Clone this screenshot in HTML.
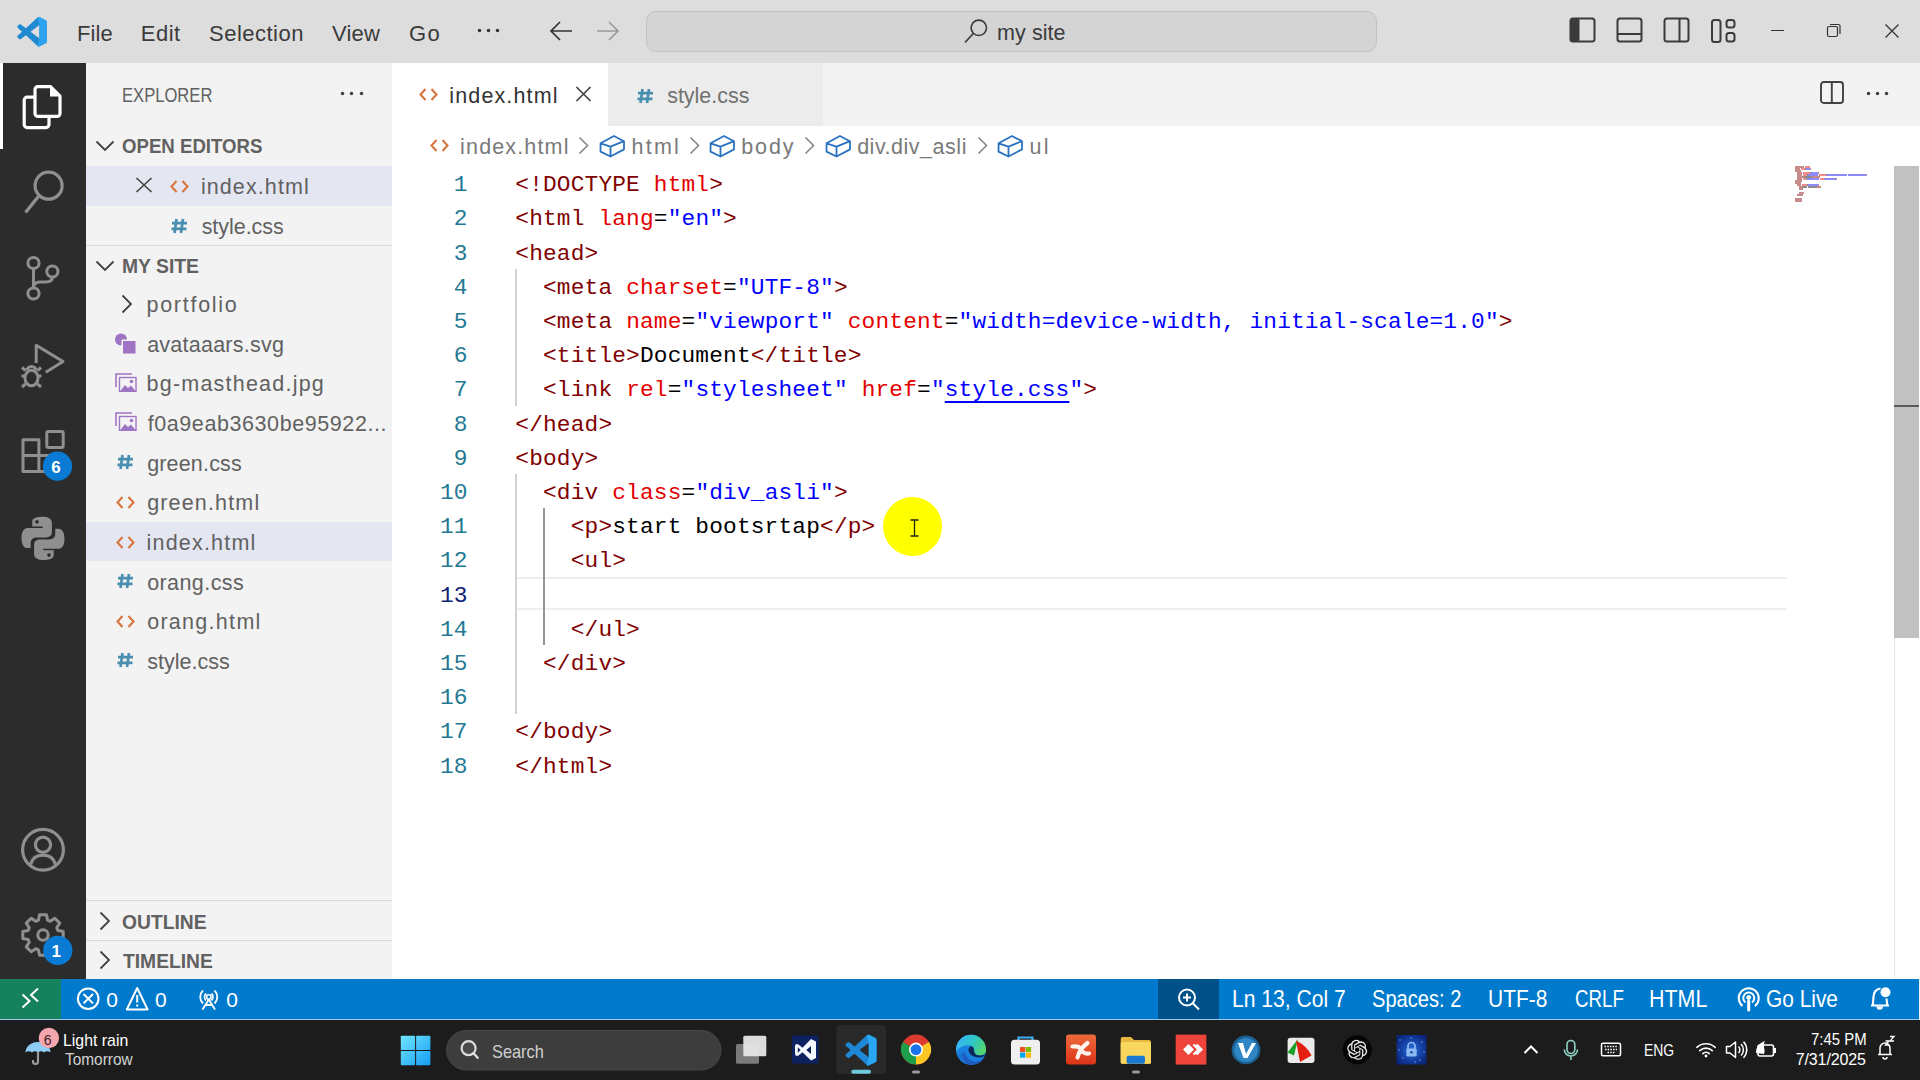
<!DOCTYPE html>
<html><head><meta charset="utf-8"><style>
html,body{margin:0;padding:0;width:1920px;height:1080px;overflow:hidden;background:#fff}
.r{position:absolute;display:block}
.t{position:absolute;white-space:pre}
</style></head><body>
<div class="r" style="left:0px;top:0px;width:1920px;height:63px;background:#dddddd;"></div>
<div class="r" style="left:0px;top:63px;width:86px;height:916px;background:#2c2c2c;"></div>
<div class="r" style="left:86px;top:63px;width:306px;height:916px;background:#f3f3f3;"></div>
<div class="r" style="left:392px;top:63px;width:1528px;height:63px;background:#f3f3f3;"></div>
<div class="r" style="left:392px;top:63px;width:216px;height:63px;background:#ffffff;"></div>
<div class="r" style="left:608px;top:63px;width:215px;height:63px;background:#ececec;"></div>
<div class="r" style="left:392px;top:126px;width:1528px;height:853px;background:#ffffff;"></div>
<div class="r" style="left:0px;top:979px;width:1920px;height:40px;background:#007acc;"></div>
<div class="r" style="left:0px;top:979px;width:61px;height:40px;background:#16825d;"></div>
<div class="r" style="left:1158px;top:979px;width:61px;height:40px;background:#00508a;"></div>
<div class="r" style="left:0px;top:1019px;width:1920px;height:1px;background:#9cc9ea;"></div>
<div class="r" style="left:0px;top:1020px;width:1920px;height:60px;background:#1c1c1c;"></div>
<svg class="r" style="left:16.5px;top:16.5px;overflow:visible" width="30" height="29.5" viewBox="0 0 100 100"><path d="M96.46 10.8L75.86.87a6.23 6.23 0 0 0-7.1 1.21L29.35 38.04 12.19 25.01a4.16 4.16 0 0 0-5.32.24l-5.5 5a4.16 4.16 0 0 0 0 6.16L16.26 50 1.37 63.58a4.16 4.16 0 0 0 0 6.16l5.5 5a4.16 4.16 0 0 0 5.32.24l17.16-13.03 39.41 35.96a6.22 6.22 0 0 0 7.1 1.21l20.6-9.92a6.24 6.24 0 0 0 3.54-5.63V16.43a6.24 6.24 0 0 0-3.54-5.63zM75.02 72.7L45.11 50l29.91-22.7v45.4z" fill="#1f8ad2"/><path d="M75.86.87a6.23 6.23 0 0 0-7.1 1.21L75.02 27.3v45.4l-6.26 25.22a6.22 6.22 0 0 0 7.1 1.21l20.6-9.92a6.24 6.24 0 0 0 3.54-5.63V16.43a6.24 6.24 0 0 0-3.54-5.63z" fill="#2ea4f0"/></svg>
<div class="t" style="left:76.94px;top:23.00px;font:400 22px/1 'Liberation Sans',sans-serif;color:#3b3b3b;letter-spacing:0.110px;">File</div>
<div class="t" style="left:140.74px;top:23.00px;font:400 22px/1 'Liberation Sans',sans-serif;color:#3b3b3b;letter-spacing:0.510px;">Edit</div>
<div class="t" style="left:209.01px;top:23.00px;font:400 22px/1 'Liberation Sans',sans-serif;color:#3b3b3b;letter-spacing:0.486px;">Selection</div>
<div class="t" style="left:331.89px;top:23.00px;font:400 22px/1 'Liberation Sans',sans-serif;color:#3b3b3b;letter-spacing:0.270px;">View</div>
<div class="t" style="left:408.90px;top:23.00px;font:400 22px/1 'Liberation Sans',sans-serif;color:#3b3b3b;letter-spacing:1.610px;">Go</div>
<svg class="r" style="left:476.9px;top:27.9px;" width="5" height="5" viewBox="0 0 5 5"><circle cx="2.5" cy="2.5" r="1.75" fill="#333"/></svg>
<svg class="r" style="left:485.9px;top:27.9px;" width="5" height="5" viewBox="0 0 5 5"><circle cx="2.5" cy="2.5" r="1.75" fill="#333"/></svg>
<svg class="r" style="left:495.0px;top:27.9px;" width="5" height="5" viewBox="0 0 5 5"><circle cx="2.5" cy="2.5" r="1.75" fill="#333"/></svg>
<svg class="r" style="left:548px;top:20px;" width="26" height="22" viewBox="0 0 26 22"><path d="M3 11H24M12 2L3 11L12 20" stroke="#333" stroke-width="1.7" fill="none"/></svg>
<svg class="r" style="left:595px;top:20px;" width="26" height="22" viewBox="0 0 26 22"><path d="M2 11H23M14 2L23 11L14 20" stroke="#999" stroke-width="1.6" fill="none"/></svg>
<div class="r" style="left:646px;top:11px;width:729px;height:39px;background:#d4d4d4;border:1px solid #c2c2c2;border-radius:10px"></div>
<svg class="r" style="left:963px;top:18px;" width="27" height="27" viewBox="0 0 27 27"><circle cx="15.8" cy="9.8" r="7.7" stroke="#3b3b3b" stroke-width="1.6" fill="none"/><path d="M10.3 15.5L2 24.5" stroke="#3b3b3b" stroke-width="1.8"/></svg>
<div class="t" style="left:997.10px;top:22.62px;font:400 21.5px/1 'Liberation Sans',sans-serif;color:#3b3b3b;letter-spacing:0.053px;">my site</div>
<svg class="r" style="left:1569px;top:17px;" width="28" height="27" viewBox="0 0 28 27"><rect x="1.5" y="1.5" width="24" height="23" rx="2.5" stroke="#3b3b3b" stroke-width="2" fill="none"/><rect x="1.5" y="1.5" width="9" height="23" rx="2" fill="#3b3b3b"/></svg>
<svg class="r" style="left:1616px;top:17px;" width="28" height="27" viewBox="0 0 28 27"><rect x="1.5" y="1.5" width="24" height="23" rx="2.5" stroke="#3b3b3b" stroke-width="2" fill="none"/><path d="M1.5 17H25.5" stroke="#3b3b3b" stroke-width="2"/></svg>
<svg class="r" style="left:1663px;top:17px;" width="28" height="27" viewBox="0 0 28 27"><rect x="1.5" y="1.5" width="24" height="23" rx="2.5" stroke="#3b3b3b" stroke-width="2" fill="none"/><path d="M16.5 1.5V25" stroke="#3b3b3b" stroke-width="2"/></svg>
<svg class="r" style="left:1711px;top:18px;" width="27" height="26" viewBox="0 0 27 26"><rect x="1" y="2" width="8.5" height="22" rx="2.5" stroke="#3b3b3b" stroke-width="2" fill="none"/><rect x="15.5" y="2" width="8" height="7.5" rx="2.5" stroke="#3b3b3b" stroke-width="2" fill="none"/><rect x="15.5" y="15" width="8" height="8.5" rx="2.5" stroke="#3b3b3b" stroke-width="2" fill="none"/></svg>
<div class="r" style="left:1771px;top:30px;width:13px;height:1.3px;background:#333;"></div>
<svg class="r" style="left:1826px;top:23px;" width="16" height="15" viewBox="0 0 16 15"><rect x="1.5" y="3.5" width="10" height="10" rx="1.5" stroke="#333" stroke-width="1.2" fill="none"/><path d="M4 1.5H12.5a1.5 1.5 0 0 1 1.5 1.5V11" stroke="#333" stroke-width="1.2" fill="none"/></svg>
<svg class="r" style="left:1884px;top:23px;" width="16" height="16" viewBox="0 0 16 16"><path d="M1.5 1.5L14.5 14.5M14.5 1.5L1.5 14.5" stroke="#333" stroke-width="1.3"/></svg>
<div class="r" style="left:0px;top:63px;width:3px;height:86px;background:#ffffff;"></div>
<svg class="r" style="left:0px;top:0px;" width="86" height="979" viewBox="0 0 86 979"><path d="M34 97.2H27.2a3 3 0 0 0-3 3V124.6a3 3 0 0 0 3 3H46a3 3 0 0 0 3-3V117" stroke="#fff" stroke-width="3.2" fill="none"/><path d="M38 86.6H50.5L60 96.1V113.4a3 3 0 0 1-3 3H38a3 3 0 0 1-3-3V89.6a3 3 0 0 1 3-3Z" stroke="#fff" stroke-width="3.2" fill="none" stroke-linejoin="round"/><path d="M50 87.5V96.5H59Z" fill="#fff"/><circle cx="48.6" cy="185.7" r="13.5" stroke="#8f8f8f" stroke-width="3.2" fill="none"/><path d="M39.2 195.5L25.5 212.5" stroke="#8f8f8f" stroke-width="3.4"/><g stroke="#8f8f8f" stroke-width="3" fill="none"><circle cx="33.5" cy="263" r="5.6"/><circle cx="33.5" cy="293.5" r="5.6"/><circle cx="52.4" cy="271.5" r="5.6"/><path d="M33.5 268.6V287.9M52.4 277.1C52.4 281 49 282 46 282H40C36 282 33.5 284 33.5 288"/></g><g stroke="#8f8f8f" stroke-width="3" fill="none" stroke-linejoin="round"><path d="M36.2 363V345.2L63 361.5L45.8 372.2"/><ellipse cx="31.5" cy="378" rx="6.5" ry="7.8"/><path d="M25 376H21.5M38 376H41.5M25.5 370.5L22 367.5M37.5 370.5L41 367.5M25.5 384L22 387M37.5 384L41 387M27 370.5A4.5 4 0 0 1 36 370.5"/></g><g stroke="#8f8f8f" stroke-width="3" fill="none" stroke-linejoin="round"><path d="M23 439.8H38.9V471.5H23ZM23 455.6H57.5V471.5H38.9"/><rect x="46.8" y="431.5" width="16.4" height="16" rx="1.5"/></g><circle cx="57.5" cy="466.2" r="14.6" fill="#0a7bd4"/><path fill="#8f8f8f" d="M42.6 516.8c-11 0-10.3 4.8-10.3 4.8v5h10.5v1.5H28.1s-6.6-.8-6.6 9.8c0 10.6 5.8 10.2 5.8 10.2h3.4v-4.9s-.2-5.8 5.7-5.8h10s5.5.1 5.5-5.3v-9s.8-6.3-9.3-6.3zm-5.6 3.1c1 0 1.8.8 1.8 1.8s-.8 1.8-1.8 1.8-1.8-.8-1.8-1.8.8-1.8 1.8-1.8z"/><path fill="#8f8f8f" d="M43.4 560c11 0 10.3-4.8 10.3-4.8v-5H43.2v-1.5h14.7s6.6.8 6.6-9.8c0-10.6-5.8-10.2-5.8-10.2h-3.4v4.9s.2 5.8-5.7 5.8h-10s-5.5-.1-5.5 5.3v9s-.8 6.3 9.3 6.3zm5.6-3.1c-1 0-1.8-.8-1.8-1.8s.8-1.8 1.8-1.8 1.8.8 1.8 1.8-.8 1.8-1.8 1.8z"/><g stroke="#8f8f8f" stroke-width="3.2" fill="none"><circle cx="43" cy="849.7" r="20.4"/><circle cx="43" cy="844.8" r="7.6"/><path d="M30.5 864.5C32.5 857.5 37 855.2 43 855.2S53.5 857.5 55.5 864.5"/></g><polygon points="57.81,930.42 63.20,931.53 63.20,938.47 57.81,939.58 56.71,942.23 59.74,946.83 54.83,951.74 50.23,948.71 47.58,949.81 46.47,955.20 39.53,955.20 38.42,949.81 35.77,948.71 31.17,951.74 26.26,946.83 29.29,942.23 28.19,939.58 22.80,938.47 22.80,931.53 28.19,930.42 29.29,927.77 26.26,923.17 31.17,918.26 35.77,921.29 38.42,920.19 39.53,914.80 46.47,914.80 47.58,920.19 50.23,921.29 54.83,918.26 59.74,923.17 56.71,927.77" stroke="#8f8f8f" stroke-width="3" fill="none" stroke-linejoin="round"/><circle cx="43" cy="935" r="5.2" stroke="#8f8f8f" stroke-width="3" fill="none"/><circle cx="57.8" cy="950.4" r="14.6" fill="#0a7bd4"/></svg>
<div class="t" style="left:51.20px;top:458.75px;font:700 17px/1 'Liberation Sans',sans-serif;color:#ffffff;letter-spacing:0.000px;">6</div>
<div class="t" style="left:51.48px;top:943.05px;font:700 17px/1 'Liberation Sans',sans-serif;color:#ffffff;letter-spacing:0.000px;">1</div>
<div class="t" style="left:122.07px;top:85.99px;font:400 19.9px/1 'Liberation Sans',sans-serif;color:#616161;letter-spacing:0.000px;transform:scaleX(0.8341);transform-origin:0 0;">EXPLORER</div>
<svg class="r" style="left:339.8px;top:90.8px;" width="5" height="5" viewBox="0 0 5 5"><circle cx="2.5" cy="2.5" r="1.75" fill="#424242"/></svg>
<svg class="r" style="left:349.2px;top:90.8px;" width="5" height="5" viewBox="0 0 5 5"><circle cx="2.5" cy="2.5" r="1.75" fill="#424242"/></svg>
<svg class="r" style="left:358.5px;top:90.8px;" width="5" height="5" viewBox="0 0 5 5"><circle cx="2.5" cy="2.5" r="1.75" fill="#424242"/></svg>
<svg class="r" style="left:95px;top:140px;" width="20" height="12" viewBox="0 0 20 12"><path d="M1.5 1.5L10 10L18.5 1.5" stroke="#424242" stroke-width="1.8" fill="none"/></svg>
<div class="t" style="left:122.25px;top:136.31px;font:700 20.1px/1 'Liberation Sans',sans-serif;color:#616161;letter-spacing:0.000px;transform:scaleX(0.9270);transform-origin:0 0;">OPEN EDITORS</div>
<div class="r" style="left:86px;top:166px;width:306px;height:40px;background:#e4e6f1;"></div>
<svg class="r" style="left:135px;top:177px;" width="18" height="16" viewBox="0 0 18 16"><path d="M1.5 1L16.5 15M16.5 1L1.5 15" stroke="#424242" stroke-width="1.6"/></svg>
<svg class="r" style="left:169.5px;top:180px;" width="19" height="13" viewBox="0 0 19 13"><path d="M6.5 1L1.5 6.5L6.5 12M12.5 1L17.5 6.5L12.5 12" stroke="#d8753e" stroke-width="2.1" fill="none"/></svg>
<div class="t" style="left:200.90px;top:177.22px;font:400 21.5px/1 'Liberation Sans',sans-serif;color:#616161;letter-spacing:1.096px;">index.html</div>
<svg class="r" style="left:171px;top:217.5px;" width="17" height="16" viewBox="0 0 17 16"><path d="M5.5 1L3.5 15M12 1L10 15M1 5.2H16M0.5 10.8H15.5" stroke="#4a8fb0" stroke-width="2.7" fill="none"/></svg>
<div class="t" style="left:201.66px;top:216.82px;font:400 21.5px/1 'Liberation Sans',sans-serif;color:#616161;letter-spacing:-0.044px;">style.css</div>
<div class="r" style="left:86px;top:245px;width:306px;height:1px;background:#dadada;"></div>
<svg class="r" style="left:95px;top:260px;" width="20" height="12" viewBox="0 0 20 12"><path d="M1.5 1.5L10 10L18.5 1.5" stroke="#424242" stroke-width="1.8" fill="none"/></svg>
<div class="t" style="left:122.14px;top:255.81px;font:700 20.1px/1 'Liberation Sans',sans-serif;color:#616161;letter-spacing:0.000px;transform:scaleX(0.9617);transform-origin:0 0;">MY SITE</div>
<svg class="r" style="left:121px;top:294px;" width="12" height="20" viewBox="0 0 12 20"><path d="M1.5 1.5L10 10L1.5 18.5" stroke="#424242" stroke-width="1.8" fill="none"/></svg>
<div class="t" style="left:146.50px;top:295.02px;font:400 21.5px/1 'Liberation Sans',sans-serif;color:#616161;letter-spacing:1.728px;">portfolio</div>
<svg class="r" style="left:114px;top:333px;" width="23" height="21" viewBox="0 0 23 21"><circle cx="7" cy="6.5" r="6" fill="#a074c4"/><rect x="7.5" y="6.5" width="14" height="14" fill="#f3f3f3"/><rect x="9" y="8" width="12.5" height="12.5" fill="#a074c4"/></svg>
<div class="t" style="left:147.14px;top:334.62px;font:400 21.5px/1 'Liberation Sans',sans-serif;color:#616161;letter-spacing:0.243px;">avataaars.svg</div>
<svg class="r" style="left:114.5px;top:372.5px;" width="22" height="19" viewBox="0 0 22 19"><path d="M1 14V1H17" stroke="#a074c4" stroke-width="1.6" fill="none"/><rect x="4.5" y="4.5" width="16.5" height="14" fill="none" stroke="#a074c4" stroke-width="1.4"/><path d="M5 18.5L10 12L13 15L16 12.5L21 18.5Z" fill="#a074c4"/><circle cx="16.5" cy="8.5" r="1.8" fill="#a074c4"/></svg>
<div class="t" style="left:146.60px;top:374.23px;font:400 21.5px/1 'Liberation Sans',sans-serif;color:#616161;letter-spacing:1.216px;">bg-masthead.jpg</div>
<svg class="r" style="left:114.5px;top:412px;" width="22" height="19" viewBox="0 0 22 19"><path d="M1 14V1H17" stroke="#a074c4" stroke-width="1.6" fill="none"/><rect x="4.5" y="4.5" width="16.5" height="14" fill="none" stroke="#a074c4" stroke-width="1.4"/><path d="M5 18.5L10 12L13 15L16 12.5L21 18.5Z" fill="#a074c4"/><circle cx="16.5" cy="8.5" r="1.8" fill="#a074c4"/></svg>
<div class="t" style="left:147.68px;top:413.82px;font:400 21.5px/1 'Liberation Sans',sans-serif;color:#616161;letter-spacing:0.585px;">f0a9eab3630be95922...</div>
<div class="r" style="left:86px;top:522px;width:306px;height:39px;background:#e4e6f1;"></div>
<svg class="r" style="left:116.5px;top:454.2px;" width="17" height="16" viewBox="0 0 17 16"><path d="M5.5 1L3.5 15M12 1L10 15M1 5.2H16M0.5 10.8H15.5" stroke="#4a8fb0" stroke-width="2.7" fill="none"/></svg>
<div class="t" style="left:147.14px;top:453.82px;font:400 21.5px/1 'Liberation Sans',sans-serif;color:#616161;letter-spacing:0.176px;">green.css</div>
<svg class="r" style="left:116px;top:496.3px;" width="19" height="13" viewBox="0 0 19 13"><path d="M6.5 1L1.5 6.5L6.5 12M12.5 1L17.5 6.5L12.5 12" stroke="#d8753e" stroke-width="2.1" fill="none"/></svg>
<div class="t" style="left:147.14px;top:493.43px;font:400 21.5px/1 'Liberation Sans',sans-serif;color:#616161;letter-spacing:1.163px;">green.html</div>
<svg class="r" style="left:116px;top:535.9px;" width="19" height="13" viewBox="0 0 19 13"><path d="M6.5 1L1.5 6.5L6.5 12M12.5 1L17.5 6.5L12.5 12" stroke="#d8753e" stroke-width="2.1" fill="none"/></svg>
<div class="t" style="left:146.60px;top:533.02px;font:400 21.5px/1 'Liberation Sans',sans-serif;color:#616161;letter-spacing:1.185px;">index.html</div>
<svg class="r" style="left:116.5px;top:573.0px;" width="17" height="16" viewBox="0 0 17 16"><path d="M5.5 1L3.5 15M12 1L10 15M1 5.2H16M0.5 10.8H15.5" stroke="#4a8fb0" stroke-width="2.7" fill="none"/></svg>
<div class="t" style="left:147.14px;top:572.62px;font:400 21.5px/1 'Liberation Sans',sans-serif;color:#616161;letter-spacing:0.426px;">orang.css</div>
<svg class="r" style="left:116px;top:615.1px;" width="19" height="13" viewBox="0 0 19 13"><path d="M6.5 1L1.5 6.5L6.5 12M12.5 1L17.5 6.5L12.5 12" stroke="#d8753e" stroke-width="2.1" fill="none"/></svg>
<div class="t" style="left:147.14px;top:612.23px;font:400 21.5px/1 'Liberation Sans',sans-serif;color:#616161;letter-spacing:1.297px;">orang.html</div>
<svg class="r" style="left:116.5px;top:652.2px;" width="17" height="16" viewBox="0 0 17 16"><path d="M5.5 1L3.5 15M12 1L10 15M1 5.2H16M0.5 10.8H15.5" stroke="#4a8fb0" stroke-width="2.7" fill="none"/></svg>
<div class="t" style="left:147.35px;top:651.83px;font:400 21.5px/1 'Liberation Sans',sans-serif;color:#616161;letter-spacing:-0.007px;">style.css</div>
<div class="r" style="left:86px;top:900px;width:306px;height:1px;background:#dadada;"></div>
<svg class="r" style="left:99px;top:911px;" width="12" height="20" viewBox="0 0 12 20"><path d="M1.5 1.5L10 10L1.5 18.5" stroke="#424242" stroke-width="1.8" fill="none"/></svg>
<div class="t" style="left:122.23px;top:911.81px;font:700 20.1px/1 'Liberation Sans',sans-serif;color:#616161;letter-spacing:0.000px;transform:scaleX(0.9581);transform-origin:0 0;">OUTLINE</div>
<div class="r" style="left:86px;top:940px;width:306px;height:1px;background:#dadada;"></div>
<svg class="r" style="left:99px;top:950px;" width="12" height="20" viewBox="0 0 12 20"><path d="M1.5 1.5L10 10L1.5 18.5" stroke="#424242" stroke-width="1.8" fill="none"/></svg>
<div class="t" style="left:122.81px;top:950.81px;font:700 20.1px/1 'Liberation Sans',sans-serif;color:#616161;letter-spacing:0.000px;transform:scaleX(0.9584);transform-origin:0 0;">TIMELINE</div>
<svg class="r" style="left:418.5px;top:88px;" width="19" height="13" viewBox="0 0 19 13"><path d="M6.5 1L1.5 6.5L6.5 12M12.5 1L17.5 6.5L12.5 12" stroke="#d8753e" stroke-width="2.1" fill="none"/></svg>
<div class="t" style="left:449.30px;top:86.22px;font:400 21.5px/1 'Liberation Sans',sans-serif;color:#333333;letter-spacing:1.129px;">index.html</div>
<svg class="r" style="left:575px;top:86px;" width="17" height="16" viewBox="0 0 17 16"><path d="M1.5 1L15.5 15M15.5 1L1.5 15" stroke="#424242" stroke-width="1.7"/></svg>
<svg class="r" style="left:636.5px;top:88px;" width="17" height="16" viewBox="0 0 17 16"><path d="M5.5 1L3.5 15M12 1L10 15M1 5.2H16M0.5 10.8H15.5" stroke="#4a8fb0" stroke-width="2.7" fill="none"/></svg>
<div class="t" style="left:667.15px;top:86.22px;font:400 21.5px/1 'Liberation Sans',sans-serif;color:#717171;letter-spacing:-0.007px;">style.css</div>
<svg class="r" style="left:1820px;top:81px;" width="24" height="23" viewBox="0 0 24 23"><rect x="1" y="1" width="22" height="21" rx="2.8" stroke="#424242" stroke-width="1.9" fill="none"/><path d="M11.8 1V22" stroke="#424242" stroke-width="1.9"/></svg>
<svg class="r" style="left:1865.9px;top:90.8px;" width="5" height="5" viewBox="0 0 5 5"><circle cx="2.5" cy="2.5" r="1.75" fill="#424242"/></svg>
<svg class="r" style="left:1875.0px;top:90.8px;" width="5" height="5" viewBox="0 0 5 5"><circle cx="2.5" cy="2.5" r="1.75" fill="#424242"/></svg>
<svg class="r" style="left:1884.0px;top:90.8px;" width="5" height="5" viewBox="0 0 5 5"><circle cx="2.5" cy="2.5" r="1.75" fill="#424242"/></svg>
<svg class="r" style="left:430px;top:138.5px;" width="19" height="13" viewBox="0 0 19 13"><path d="M6.5 1L1.5 6.5L6.5 12M12.5 1L17.5 6.5L12.5 12" stroke="#d8753e" stroke-width="2.1" fill="none"/></svg>
<div class="t" style="left:460.10px;top:137.32px;font:400 21.5px/1 'Liberation Sans',sans-serif;color:#7a7a7a;letter-spacing:1.151px;">index.html</div>
<svg class="r" style="left:578px;top:136px;" width="12" height="19" viewBox="0 0 12 19"><path d="M1.5 1.5L9.5 9.5L1.5 17.5" stroke="#8a8a8a" stroke-width="1.7" fill="none"/></svg>
<svg class="r" style="left:598.5px;top:134.5px;" width="27" height="23" viewBox="0 0 27 23"><path d="M1.6 8.3L14.9 1L25 6.2V14.4L11.5 21.5L1.5 16.6Z M1.6 8.3L11.5 11.6L25 6.2 M11.5 11.6V21.5" stroke="#2a72c0" stroke-width="1.8" stroke-linejoin="round" fill="none"/></svg>
<div class="t" style="left:631.50px;top:137.32px;font:400 21.5px/1 'Liberation Sans',sans-serif;color:#7a7a7a;letter-spacing:2.258px;">html</div>
<svg class="r" style="left:688.5px;top:136px;" width="12" height="19" viewBox="0 0 12 19"><path d="M1.5 1.5L9.5 9.5L1.5 17.5" stroke="#8a8a8a" stroke-width="1.7" fill="none"/></svg>
<svg class="r" style="left:709px;top:134.5px;" width="27" height="23" viewBox="0 0 27 23"><path d="M1.6 8.3L14.9 1L25 6.2V14.4L11.5 21.5L1.5 16.6Z M1.6 8.3L11.5 11.6L25 6.2 M11.5 11.6V21.5" stroke="#2a72c0" stroke-width="1.8" stroke-linejoin="round" fill="none"/></svg>
<div class="t" style="left:741.20px;top:137.32px;font:400 21.5px/1 'Liberation Sans',sans-serif;color:#7a7a7a;letter-spacing:1.914px;">body</div>
<svg class="r" style="left:804px;top:136px;" width="12" height="19" viewBox="0 0 12 19"><path d="M1.5 1.5L9.5 9.5L1.5 17.5" stroke="#8a8a8a" stroke-width="1.7" fill="none"/></svg>
<svg class="r" style="left:824.5px;top:134.5px;" width="27" height="23" viewBox="0 0 27 23"><path d="M1.6 8.3L14.9 1L25 6.2V14.4L11.5 21.5L1.5 16.6Z M1.6 8.3L11.5 11.6L25 6.2 M11.5 11.6V21.5" stroke="#2a72c0" stroke-width="1.8" stroke-linejoin="round" fill="none"/></svg>
<div class="t" style="left:857.14px;top:137.32px;font:400 21.5px/1 'Liberation Sans',sans-serif;color:#7a7a7a;letter-spacing:0.521px;">div.div_asli</div>
<svg class="r" style="left:976.5px;top:136px;" width="12" height="19" viewBox="0 0 12 19"><path d="M1.5 1.5L9.5 9.5L1.5 17.5" stroke="#8a8a8a" stroke-width="1.7" fill="none"/></svg>
<svg class="r" style="left:996.5px;top:134.5px;" width="27" height="23" viewBox="0 0 27 23"><path d="M1.6 8.3L14.9 1L25 6.2V14.4L11.5 21.5L1.5 16.6Z M1.6 8.3L11.5 11.6L25 6.2 M11.5 11.6V21.5" stroke="#2a72c0" stroke-width="1.8" stroke-linejoin="round" fill="none"/></svg>
<div class="t" style="left:1029.60px;top:137.32px;font:400 21.5px/1 'Liberation Sans',sans-serif;color:#7a7a7a;letter-spacing:2.133px;">ul</div>
<div class="r" style="left:516px;top:576.5px;width:1271px;height:2px;background:#eeeeee;"></div>
<div class="r" style="left:516px;top:608.2px;width:1271px;height:2px;background:#eeeeee;"></div>
<div class="r" style="left:515px;top:268.5px;width:1.6px;height:137px;background:#d3d3d3;"></div>
<div class="r" style="left:515px;top:474px;width:1.6px;height:240px;background:#d3d3d3;"></div>
<div class="r" style="left:543px;top:508px;width:1.6px;height:137px;background:#939393;"></div>
<div class="t" style="left:453.75px;top:174.27px;font:400 22.8px/1 'Liberation Mono',monospace;letter-spacing:0.170px;color:#237893">1</div>
<div class="t" style="left:515.30px;top:174.27px;font:400 22.8px/1 'Liberation Mono',monospace;letter-spacing:0.170px"><span style="color:#800000">&lt;!DOCTYPE</span><span style="color:#000000"> </span><span style="color:#e50000">html</span><span style="color:#800000">&gt;</span></div>
<div class="t" style="left:453.75px;top:208.47px;font:400 22.8px/1 'Liberation Mono',monospace;letter-spacing:0.170px;color:#237893">2</div>
<div class="t" style="left:515.30px;top:208.47px;font:400 22.8px/1 'Liberation Mono',monospace;letter-spacing:0.170px"><span style="color:#800000">&lt;html</span><span style="color:#000000"> </span><span style="color:#e50000">lang</span><span style="color:#000000">=</span><span style="color:#0000ff">"en"</span><span style="color:#800000">&gt;</span></div>
<div class="t" style="left:453.75px;top:242.67px;font:400 22.8px/1 'Liberation Mono',monospace;letter-spacing:0.170px;color:#237893">3</div>
<div class="t" style="left:515.30px;top:242.67px;font:400 22.8px/1 'Liberation Mono',monospace;letter-spacing:0.170px"><span style="color:#800000">&lt;head&gt;</span></div>
<div class="t" style="left:453.75px;top:276.87px;font:400 22.8px/1 'Liberation Mono',monospace;letter-spacing:0.170px;color:#237893">4</div>
<div class="t" style="left:515.30px;top:276.87px;font:400 22.8px/1 'Liberation Mono',monospace;letter-spacing:0.170px"><span style="color:#000000">  </span><span style="color:#800000">&lt;meta</span><span style="color:#000000"> </span><span style="color:#e50000">charset</span><span style="color:#000000">=</span><span style="color:#0000ff">"UTF-8"</span><span style="color:#800000">&gt;</span></div>
<div class="t" style="left:453.75px;top:311.07px;font:400 22.8px/1 'Liberation Mono',monospace;letter-spacing:0.170px;color:#237893">5</div>
<div class="t" style="left:515.30px;top:311.07px;font:400 22.8px/1 'Liberation Mono',monospace;letter-spacing:0.170px"><span style="color:#000000">  </span><span style="color:#800000">&lt;meta</span><span style="color:#000000"> </span><span style="color:#e50000">name</span><span style="color:#000000">=</span><span style="color:#0000ff">"viewport"</span><span style="color:#000000"> </span><span style="color:#e50000">content</span><span style="color:#000000">=</span><span style="color:#0000ff">"width=device-width, initial-scale=1.0"</span><span style="color:#800000">&gt;</span></div>
<div class="t" style="left:453.75px;top:345.27px;font:400 22.8px/1 'Liberation Mono',monospace;letter-spacing:0.170px;color:#237893">6</div>
<div class="t" style="left:515.30px;top:345.27px;font:400 22.8px/1 'Liberation Mono',monospace;letter-spacing:0.170px"><span style="color:#000000">  </span><span style="color:#800000">&lt;title&gt;</span><span style="color:#000000">Document</span><span style="color:#800000">&lt;/title&gt;</span></div>
<div class="t" style="left:453.75px;top:379.47px;font:400 22.8px/1 'Liberation Mono',monospace;letter-spacing:0.170px;color:#237893">7</div>
<div class="t" style="left:515.30px;top:379.47px;font:400 22.8px/1 'Liberation Mono',monospace;letter-spacing:0.170px"><span style="color:#000000">  </span><span style="color:#800000">&lt;link</span><span style="color:#000000"> </span><span style="color:#e50000">rel</span><span style="color:#000000">=</span><span style="color:#0000ff">"stylesheet"</span><span style="color:#000000"> </span><span style="color:#e50000">href</span><span style="color:#000000">=</span><span style="color:#0000ff">"</span><span style="color:#0000ff;text-decoration:underline;text-underline-offset:5px;text-decoration-thickness:2px">style.css</span><span style="color:#0000ff">"</span><span style="color:#800000">&gt;</span></div>
<div class="t" style="left:453.75px;top:413.67px;font:400 22.8px/1 'Liberation Mono',monospace;letter-spacing:0.170px;color:#237893">8</div>
<div class="t" style="left:515.30px;top:413.67px;font:400 22.8px/1 'Liberation Mono',monospace;letter-spacing:0.170px"><span style="color:#800000">&lt;/head&gt;</span></div>
<div class="t" style="left:453.75px;top:447.87px;font:400 22.8px/1 'Liberation Mono',monospace;letter-spacing:0.170px;color:#237893">9</div>
<div class="t" style="left:515.30px;top:447.87px;font:400 22.8px/1 'Liberation Mono',monospace;letter-spacing:0.170px"><span style="color:#800000">&lt;body&gt;</span></div>
<div class="t" style="left:439.90px;top:482.07px;font:400 22.8px/1 'Liberation Mono',monospace;letter-spacing:0.170px;color:#237893">10</div>
<div class="t" style="left:515.30px;top:482.07px;font:400 22.8px/1 'Liberation Mono',monospace;letter-spacing:0.170px"><span style="color:#000000">  </span><span style="color:#800000">&lt;div</span><span style="color:#000000"> </span><span style="color:#e50000">class</span><span style="color:#000000">=</span><span style="color:#0000ff">"div_asli"</span><span style="color:#800000">&gt;</span></div>
<div class="t" style="left:439.90px;top:516.27px;font:400 22.8px/1 'Liberation Mono',monospace;letter-spacing:0.170px;color:#237893">11</div>
<div class="t" style="left:515.30px;top:516.27px;font:400 22.8px/1 'Liberation Mono',monospace;letter-spacing:0.170px"><span style="color:#000000">    </span><span style="color:#800000">&lt;p&gt;</span><span style="color:#000000">start bootsrtap</span><span style="color:#800000">&lt;/p&gt;</span></div>
<div class="t" style="left:439.90px;top:550.47px;font:400 22.8px/1 'Liberation Mono',monospace;letter-spacing:0.170px;color:#237893">12</div>
<div class="t" style="left:515.30px;top:550.47px;font:400 22.8px/1 'Liberation Mono',monospace;letter-spacing:0.170px"><span style="color:#000000">    </span><span style="color:#800000">&lt;ul&gt;</span></div>
<div class="t" style="left:439.90px;top:584.67px;font:400 22.8px/1 'Liberation Mono',monospace;letter-spacing:0.170px;color:#0b216f">13</div>
<div class="t" style="left:439.90px;top:618.87px;font:400 22.8px/1 'Liberation Mono',monospace;letter-spacing:0.170px;color:#237893">14</div>
<div class="t" style="left:515.30px;top:618.87px;font:400 22.8px/1 'Liberation Mono',monospace;letter-spacing:0.170px"><span style="color:#000000">    </span><span style="color:#800000">&lt;/ul&gt;</span></div>
<div class="t" style="left:439.90px;top:653.07px;font:400 22.8px/1 'Liberation Mono',monospace;letter-spacing:0.170px;color:#237893">15</div>
<div class="t" style="left:515.30px;top:653.07px;font:400 22.8px/1 'Liberation Mono',monospace;letter-spacing:0.170px"><span style="color:#000000">  </span><span style="color:#800000">&lt;/div&gt;</span></div>
<div class="t" style="left:439.90px;top:687.27px;font:400 22.8px/1 'Liberation Mono',monospace;letter-spacing:0.170px;color:#237893">16</div>
<div class="t" style="left:439.90px;top:721.47px;font:400 22.8px/1 'Liberation Mono',monospace;letter-spacing:0.170px;color:#237893">17</div>
<div class="t" style="left:515.30px;top:721.47px;font:400 22.8px/1 'Liberation Mono',monospace;letter-spacing:0.170px"><span style="color:#800000">&lt;/body&gt;</span></div>
<div class="t" style="left:439.90px;top:755.67px;font:400 22.8px/1 'Liberation Mono',monospace;letter-spacing:0.170px;color:#237893">18</div>
<div class="t" style="left:515.30px;top:755.67px;font:400 22.8px/1 'Liberation Mono',monospace;letter-spacing:0.170px"><span style="color:#800000">&lt;/html&gt;</span></div>
<div class="r" style="left:882.5px;top:497px;width:59px;height:59px;border-radius:50%;background:#ffff00"></div>
<svg class="r" style="left:910px;top:519px;" width="9" height="18" viewBox="0 0 9 18"><path d="M0.5 1H8.5M4.5 1V17M0.5 17H8.5" stroke="#222" stroke-width="1.3" fill="none"/></svg>
<div class="r" style="left:1894px;top:166px;width:25px;height:472px;background:#c1c1c1;"></div>
<div class="r" style="left:1894px;top:404.5px;width:25px;height:2.5px;background:#5a5a5a;"></div>
<div class="r" style="left:1893.5px;top:638px;width:1px;height:341px;background:#e6e6e6;"></div>
<div class="r" style="left:1795.0px;top:166.20px;width:9.0px;height:1.5px;background:#800000;opacity:.45"></div>
<div class="r" style="left:1805.0px;top:166.20px;width:4.0px;height:1.5px;background:#e50000;opacity:.45"></div>
<div class="r" style="left:1809.0px;top:166.20px;width:1.0px;height:1.5px;background:#800000;opacity:.45"></div>
<div class="r" style="left:1795.0px;top:168.21px;width:5.0px;height:1.5px;background:#800000;opacity:.45"></div>
<div class="r" style="left:1801.0px;top:168.21px;width:4.0px;height:1.5px;background:#e50000;opacity:.45"></div>
<div class="r" style="left:1805.0px;top:168.21px;width:1.0px;height:1.5px;background:#000000;opacity:.45"></div>
<div class="r" style="left:1806.0px;top:168.21px;width:4.0px;height:1.5px;background:#0000ff;opacity:.45"></div>
<div class="r" style="left:1810.0px;top:168.21px;width:1.0px;height:1.5px;background:#800000;opacity:.45"></div>
<div class="r" style="left:1795.0px;top:170.22px;width:6.0px;height:1.5px;background:#800000;opacity:.45"></div>
<div class="r" style="left:1797.0px;top:172.23px;width:5.0px;height:1.5px;background:#800000;opacity:.45"></div>
<div class="r" style="left:1803.0px;top:172.23px;width:7.0px;height:1.5px;background:#e50000;opacity:.45"></div>
<div class="r" style="left:1810.0px;top:172.23px;width:1.0px;height:1.5px;background:#000000;opacity:.45"></div>
<div class="r" style="left:1811.0px;top:172.23px;width:7.0px;height:1.5px;background:#0000ff;opacity:.45"></div>
<div class="r" style="left:1818.0px;top:172.23px;width:1.0px;height:1.5px;background:#800000;opacity:.45"></div>
<div class="r" style="left:1797.0px;top:174.24px;width:5.0px;height:1.5px;background:#800000;opacity:.45"></div>
<div class="r" style="left:1803.0px;top:174.24px;width:4.0px;height:1.5px;background:#e50000;opacity:.45"></div>
<div class="r" style="left:1807.0px;top:174.24px;width:1.0px;height:1.5px;background:#000000;opacity:.45"></div>
<div class="r" style="left:1808.0px;top:174.24px;width:10.0px;height:1.5px;background:#0000ff;opacity:.45"></div>
<div class="r" style="left:1819.0px;top:174.24px;width:7.0px;height:1.5px;background:#e50000;opacity:.45"></div>
<div class="r" style="left:1826.0px;top:174.24px;width:1.0px;height:1.5px;background:#000000;opacity:.45"></div>
<div class="r" style="left:1827.0px;top:174.24px;width:20.0px;height:1.5px;background:#0000ff;opacity:.45"></div>
<div class="r" style="left:1848.0px;top:174.24px;width:18.0px;height:1.5px;background:#0000ff;opacity:.45"></div>
<div class="r" style="left:1866.0px;top:174.24px;width:1.0px;height:1.5px;background:#800000;opacity:.45"></div>
<div class="r" style="left:1797.0px;top:176.25px;width:7.0px;height:1.5px;background:#800000;opacity:.45"></div>
<div class="r" style="left:1804.0px;top:176.25px;width:8.0px;height:1.5px;background:#000000;opacity:.45"></div>
<div class="r" style="left:1812.0px;top:176.25px;width:8.0px;height:1.5px;background:#800000;opacity:.45"></div>
<div class="r" style="left:1797.0px;top:178.26px;width:5.0px;height:1.5px;background:#800000;opacity:.45"></div>
<div class="r" style="left:1803.0px;top:178.26px;width:3.0px;height:1.5px;background:#e50000;opacity:.45"></div>
<div class="r" style="left:1806.0px;top:178.26px;width:1.0px;height:1.5px;background:#000000;opacity:.45"></div>
<div class="r" style="left:1807.0px;top:178.26px;width:12.0px;height:1.5px;background:#0000ff;opacity:.45"></div>
<div class="r" style="left:1820.0px;top:178.26px;width:4.0px;height:1.5px;background:#e50000;opacity:.45"></div>
<div class="r" style="left:1824.0px;top:178.26px;width:1.0px;height:1.5px;background:#000000;opacity:.45"></div>
<div class="r" style="left:1825.0px;top:178.26px;width:11.0px;height:1.5px;background:#0000ff;opacity:.45"></div>
<div class="r" style="left:1836.0px;top:178.26px;width:1.0px;height:1.5px;background:#800000;opacity:.45"></div>
<div class="r" style="left:1795.0px;top:180.27px;width:7.0px;height:1.5px;background:#800000;opacity:.45"></div>
<div class="r" style="left:1795.0px;top:182.28px;width:6.0px;height:1.5px;background:#800000;opacity:.45"></div>
<div class="r" style="left:1797.0px;top:184.29px;width:4.0px;height:1.5px;background:#800000;opacity:.45"></div>
<div class="r" style="left:1802.0px;top:184.29px;width:5.0px;height:1.5px;background:#e50000;opacity:.45"></div>
<div class="r" style="left:1807.0px;top:184.29px;width:1.0px;height:1.5px;background:#000000;opacity:.45"></div>
<div class="r" style="left:1808.0px;top:184.29px;width:10.0px;height:1.5px;background:#0000ff;opacity:.45"></div>
<div class="r" style="left:1818.0px;top:184.29px;width:1.0px;height:1.5px;background:#800000;opacity:.45"></div>
<div class="r" style="left:1799.0px;top:186.30px;width:3.0px;height:1.5px;background:#800000;opacity:.45"></div>
<div class="r" style="left:1802.0px;top:186.30px;width:5.0px;height:1.5px;background:#000000;opacity:.45"></div>
<div class="r" style="left:1808.0px;top:186.30px;width:9.0px;height:1.5px;background:#000000;opacity:.45"></div>
<div class="r" style="left:1817.0px;top:186.30px;width:4.0px;height:1.5px;background:#800000;opacity:.45"></div>
<div class="r" style="left:1799.0px;top:188.31px;width:4.0px;height:1.5px;background:#800000;opacity:.45"></div>
<div class="r" style="left:1799.0px;top:192.33px;width:5.0px;height:1.5px;background:#800000;opacity:.45"></div>
<div class="r" style="left:1797.0px;top:194.34px;width:6.0px;height:1.5px;background:#800000;opacity:.45"></div>
<div class="r" style="left:1795.0px;top:198.36px;width:7.0px;height:1.5px;background:#800000;opacity:.45"></div>
<div class="r" style="left:1795.0px;top:200.37px;width:7.0px;height:1.5px;background:#800000;opacity:.45"></div>
<svg class="r" style="left:0px;top:979px;" width="1920" height="40" viewBox="0 0 1920 40"><g transform="translate(0,-979)" fill="none" stroke="#fff"><path d="M22.5 1007.5L29.5 1001L22.5 994.5M38 988.5L31 995L38 1001.5" stroke-width="2"/><circle cx="88.2" cy="998.7" r="10.3" stroke-width="2"/><path d="M83.5 994L93 1003.4M93 994L83.5 1003.4" stroke-width="2"/><path d="M137.2 988L126.8 1009.5H147.6Z" stroke-width="2" stroke-linejoin="round"/><path d="M137.2 995V1002.5M137.2 1004.5V1006.5" stroke-width="2"/><path d="M203 990.5A9 9 0 0 0 203 1003.5M214.5 990.5A9 9 0 0 1 214.5 1003.5M206 993.5A5 5 0 0 0 206 1000.5M211.5 993.5A5 5 0 0 1 211.5 1000.5" stroke-width="1.8"/><circle cx="208.8" cy="997" r="2.2" stroke-width="1.6"/><path d="M208.8 999.5L202.5 1009.5M208.8 999.5L215 1009.5M204.5 1005H213" stroke-width="1.8"/><circle cx="1187" cy="997.5" r="8" stroke-width="2"/><path d="M1192.8 1003.3L1199 1009.5M1187 993.5V1001.5M1183 997.5H1191" stroke-width="2"/><path d="M1742.5 1006A10 10 0 1 1 1755 1006" stroke-width="2"/><path d="M1745.5 1002.5A5.5 5.5 0 1 1 1752 1002.5" stroke-width="2"/><circle cx="1748.7" cy="997.5" r="2" fill="#fff"/><path d="M1748.7 1001V1010" stroke-width="3" stroke-linecap="round"/><path d="M1871 1005.5H1889M1872.8 1005.5L1873.5 997A6.5 8 0 0 1 1880.5 988.8M1886.5 998.5L1887.3 1005.5" stroke-width="2.2" stroke-linejoin="round"/><path d="M1876.5 1006.5A3.2 3.2 0 0 0 1882.9 1006.5Z" fill="#fff" stroke="none"/><circle cx="1885.5" cy="992.2" r="5" fill="#fff" stroke="none"/></g></svg>
<div class="r" style="left:1919px;top:979px;width:1px;height:41px;background:#e8f4fc;"></div>
<div class="t" style="left:106.16px;top:989.25px;font:400 21px/1 'Liberation Sans',sans-serif;color:#ffffff;letter-spacing:0.000px;">0</div>
<div class="t" style="left:154.96px;top:989.25px;font:400 21px/1 'Liberation Sans',sans-serif;color:#ffffff;letter-spacing:0.000px;">0</div>
<div class="t" style="left:226.16px;top:989.25px;font:400 21px/1 'Liberation Sans',sans-serif;color:#ffffff;letter-spacing:0.000px;">0</div>
<div class="t" style="left:1231.71px;top:988.05px;font:400 23.7px/1 'Liberation Sans',sans-serif;color:#ffffff;letter-spacing:0.000px;transform:scaleX(0.8904);transform-origin:0 0;">Ln 13, Col 7</div>
<div class="t" style="left:1372.40px;top:988.05px;font:400 23.7px/1 'Liberation Sans',sans-serif;color:#ffffff;letter-spacing:0.000px;transform:scaleX(0.8478);transform-origin:0 0;">Spaces: 2</div>
<div class="t" style="left:1488.43px;top:988.05px;font:400 23.7px/1 'Liberation Sans',sans-serif;color:#ffffff;letter-spacing:0.000px;transform:scaleX(0.8858);transform-origin:0 0;">UTF-8</div>
<div class="t" style="left:1574.86px;top:988.05px;font:400 23.7px/1 'Liberation Sans',sans-serif;color:#ffffff;letter-spacing:0.000px;transform:scaleX(0.7903);transform-origin:0 0;">CRLF</div>
<div class="t" style="left:1649.28px;top:988.05px;font:400 23.7px/1 'Liberation Sans',sans-serif;color:#ffffff;letter-spacing:0.000px;transform:scaleX(0.9053);transform-origin:0 0;">HTML</div>
<div class="t" style="left:1766.46px;top:988.05px;font:400 23.7px/1 'Liberation Sans',sans-serif;color:#ffffff;letter-spacing:0.000px;transform:scaleX(0.8817);transform-origin:0 0;">Go Live</div>
<svg class="r" style="left:0px;top:1020px;" width="1920" height="60" viewBox="0 0 1920 60"><g transform="translate(0,-1020)"><path d="M25.5 1052.5A12.5 10.5 0 0 1 50.5 1052.5Q47 1050 44 1052.5Q41 1050 38 1052.5Q35 1050 32 1052.5Q28.5 1050 25.5 1052.5Z" fill="#8ecdf5"/><path d="M38 1052V1061.5A2.5 2.5 0 0 1 33 1061.5V1060" stroke="#9a9a9a" stroke-width="2.2" fill="none"/><circle cx="48.9" cy="1038" r="10.2" fill="#f4a6ae"/><defs><linearGradient id="wg" x1="400" y1="1035" x2="431" y2="1066" gradientUnits="userSpaceOnUse"><stop offset="0" stop-color="#74e6ff"/><stop offset="1" stop-color="#129cf3"/></linearGradient></defs><g fill="url(#wg)"><rect x="400.8" y="1035.8" width="14.3" height="14.3" rx="0.8"/><rect x="416.1" y="1035.8" width="14.3" height="14.3" rx="0.8"/><rect x="400.8" y="1051" width="14.3" height="14.2" rx="0.8"/><rect x="416.1" y="1051" width="14.3" height="14.2" rx="0.8"/></g><rect x="446.5" y="1030.5" width="274.5" height="39.5" rx="19.75" fill="#3d3d3d" stroke="#474747" stroke-width="1"/><circle cx="468.6" cy="1048.2" r="7" stroke="#dedede" stroke-width="2.2" fill="#4a4a4a"/><path d="M473.6 1053.3L477.6 1057.8" stroke="#dedede" stroke-width="2.4" stroke-linecap="round"/><rect x="736" y="1044" width="23" height="19.7" rx="1.5" fill="#7a7a7a"/><rect x="743.3" y="1035.7" width="23" height="20.5" rx="1.5" fill="#e6e6e6" opacity="0.95"/><rect x="792" y="1035.5" width="26.5" height="28" rx="1" fill="#0b2160"/><path fill-rule="evenodd" fill="#f4f8ff" d="M811 1039L816 1041.5V1058L811 1060.5L802.5 1052.3L798.5 1055.5Q795 1057 795 1053.5V1046.5Q795 1043 798.5 1044.5L802.5 1047.7Z M811 1046L811 1054L806.3 1050Z M797.8 1047.3L800.6 1050L797.8 1052.7Z"/><rect x="836.5" y="1025" width="49.5" height="49" rx="4" fill="#292929"/><rect x="851.3" y="1069.8" width="19.7" height="4" rx="2" fill="#6fcbdc"/><g transform="translate(845.5,1034.6) scale(0.31)"><path d="M96.46 10.8L75.86.87a6.23 6.23 0 0 0-7.1 1.21L29.35 38.04 12.19 25.01a4.16 4.16 0 0 0-5.32.24l-5.5 5a4.16 4.16 0 0 0 0 6.16L16.26 50 1.37 63.58a4.16 4.16 0 0 0 0 6.16l5.5 5a4.16 4.16 0 0 0 5.32.24l17.16-13.03 39.41 35.96a6.22 6.22 0 0 0 7.1 1.21l20.6-9.92a6.24 6.24 0 0 0 3.54-5.63V16.43a6.24 6.24 0 0 0-3.54-5.63zM75.02 72.7L45.11 50l29.91-22.7v45.4z" fill="#1e88d6"/><path d="M75.86.87a6.23 6.23 0 0 0-7.1 1.21L75.02 27.3v45.4l-6.26 25.22a6.22 6.22 0 0 0 7.1 1.21l20.6-9.92a6.24 6.24 0 0 0 3.54-5.63V16.43a6.24 6.24 0 0 0-3.54-5.63z" fill="#2aa6f2"/></g><circle cx="916" cy="1049.6" r="15" fill="#db3a2f"/><path d="M916 1049.6L903 1042.1A15 15 0 0 0 916.0 1064.6Z" fill="#1e9e4a"/><path d="M916 1049.6L929 1042.1A15 15 0 0 1 916 1064.6Z" fill="#fcc625"/><circle cx="916" cy="1049.6" r="7" fill="#fff"/><circle cx="916" cy="1049.6" r="5.4" fill="#1a73e8"/><rect x="912" y="1070.4" width="8" height="3.2" rx="1.6" fill="#9a9a9a"/><defs><linearGradient id="eg" x1="958" y1="1040" x2="986" y2="1052" gradientUnits="userSpaceOnUse"><stop offset="0" stop-color="#35b6f5"/><stop offset="0.5" stop-color="#2fc7c0"/><stop offset="1" stop-color="#5fd85a"/></linearGradient></defs><circle cx="971" cy="1049.8" r="15" fill="#1a80e2"/><path d="M956 1049.8A15 15 0 0 1 986 1049.8C986 1053.5 983.5 1055.5 979.5 1055.5C975.5 1055.5 974 1052.5 974 1050C974 1047 971.5 1045 968 1045.2C962 1045.5 957.5 1048.5 956 1052Z" fill="url(#eg)"/><path d="M974 1050C974 1052.5 975.5 1055.5 979.5 1055.5C982.5 1055.5 984.5 1054.5 985.5 1053.5C984 1056.5 982 1057.5 979 1057.5C974 1057.5 968.5 1054.5 968.5 1050C968.5 1047.8 970 1046.5 971.2 1046.3C973 1046.8 974 1048.2 974 1050Z" fill="#0b2a5a"/><path d="M962.5 1052C962 1058 967 1063.5 973 1064.6C967 1065.5 959 1061 957 1055Z" fill="#1c6fd0" opacity="0.8"/><path d="M965 1051.5C965 1057 970 1061.5 976 1061.5C980 1061.5 983 1059.5 984.5 1057.5C982 1062 977 1064.8 971 1064.8C966 1064.8 962 1059 962.5 1054Z" fill="#1f5cc0"/><path d="M1018.5 1041V1037.5H1032.5V1041" stroke="#39aef0" stroke-width="2.2" fill="none"/><rect x="1011" y="1039.7" width="29" height="24.8" rx="3.5" fill="#efefef"/><rect x="1020" y="1047" width="5.3" height="5.1" fill="#f25022"/><rect x="1025.8" y="1047" width="5.3" height="5.1" fill="#7fba00"/><rect x="1020" y="1052.6" width="5.3" height="5.1" fill="#00a4ef"/><rect x="1025.8" y="1052.6" width="5.3" height="5.1" fill="#ffb900"/><defs><linearGradient id="rg" x1="0" y1="0" x2="0" y2="1"><stop offset="0" stop-color="#ee6a3c"/><stop offset="1" stop-color="#dc3418"/></linearGradient></defs><rect x="1066" y="1034.6" width="30" height="30" rx="3" fill="url(#rg)"/><path d="M1072.5 1046.5Q1079 1045.5 1081 1049.5Q1083 1054 1089 1053.5M1087.5 1043Q1083.5 1046 1081 1049.5Q1078.5 1053 1077.5 1057.5" stroke="#fff3ec" stroke-width="4.2" fill="none" stroke-linecap="round"/><path d="M1120.7 1039A2 2 0 0 1 1122.7 1037H1131L1134 1040H1149A2 2 0 0 1 1151 1042V1062A1.7 1.7 0 0 1 1149.3 1063.7H1122.4A1.7 1.7 0 0 1 1120.7 1062Z" fill="#e8b83e"/><rect x="1120.7" y="1042" width="30.3" height="21.7" rx="1.5" fill="#f9d65d"/><rect x="1126.6" y="1055.7" width="18.4" height="8" rx="2" fill="#1a78d0"/><rect x="1132" y="1070.4" width="8" height="3.2" rx="1.6" fill="#9a9a9a"/><rect x="1175.7" y="1034.6" width="30.7" height="30" fill="#ef443b"/><path d="M1183 1049.5L1188.5 1044L1194 1049.5L1188.5 1055Z" fill="#fff"/><path d="M1193.5 1044.5L1198.5 1049.5L1193.5 1054.5M1196.5 1044.5L1201.5 1049.5L1196.5 1054.5" stroke="#fff" stroke-width="2.2" fill="none"/><circle cx="1246" cy="1049.9" r="14.4" fill="#1b5f91"/><circle cx="1246" cy="1049.9" r="12" fill="#2e86c4"/><path d="M1238 1043H1243L1246 1054L1252 1043H1256L1247.5 1058H1243.5Z" fill="#fff"/><rect x="1287.6" y="1037.8" width="26.9" height="25.2" rx="3" fill="#ebebeb"/><path d="M1298 1039L1287.5 1052.5L1294 1055.5Z" fill="#1ea12a"/><path d="M1296 1040.5Q1307 1046 1311.5 1055.5L1300 1062Z" fill="#e3200f"/><circle cx="1357.2" cy="1049.8" r="14.6" fill="#050505"/><path transform="translate(1347.2,1039.8) scale(0.835)" fill="#ececec" d="M22.2819 9.8211a5.9847 5.9847 0 0 0-.5157-4.9108 6.0462 6.0462 0 0 0-6.5098-2.9A6.0651 6.0651 0 0 0 4.9807 4.1818a5.9847 5.9847 0 0 0-3.9977 2.9 6.0462 6.0462 0 0 0 .7427 7.0966 5.98 5.98 0 0 0 .511 4.9107 6.051 6.051 0 0 0 6.5146 2.9001A5.9847 5.9847 0 0 0 13.2599 24a6.0557 6.0557 0 0 0 5.7718-4.2058 5.9894 5.9894 0 0 0 3.9977-2.9001 6.0557 6.0557 0 0 0-.7475-7.0729zm-9.022 12.6081a4.4755 4.4755 0 0 1-2.8764-1.0408l.1419-.0804 4.7783-2.7582a.7948.7948 0 0 0 .3927-.6813v-6.7369l2.02 1.1686a.071.071 0 0 1 .038.052v5.5826a4.504 4.504 0 0 1-4.4945 4.4944zm-9.6607-4.1254a4.4708 4.4708 0 0 1-.5346-3.0137l.142.0852 4.783 2.7582a.7712.7712 0 0 0 .7806 0l5.8428-3.3685v2.3324a.0804.0804 0 0 1-.0332.0615L9.74 19.9502a4.4992 4.4992 0 0 1-6.1408-1.6464zM2.3408 7.8956a4.485 4.485 0 0 1 2.3655-1.9728V11.6a.7664.7664 0 0 0 .3879.6765l5.8144 3.3543-2.0201 1.1685a.0757.0757 0 0 1-.071 0l-4.8303-2.7865A4.504 4.504 0 0 1 2.3408 7.872zm16.5963 3.8558L13.1038 8.364 15.1192 7.2a.0757.0757 0 0 1 .071 0l4.8303 2.7913a4.4944 4.4944 0 0 1-.6765 8.1042v-5.6772a.79.79 0 0 0-.407-.667zm2.0107-3.0231l-.142-.0852-4.7735-2.7818a.7759.7759 0 0 0-.7854 0L9.409 9.2297V6.8974a.0662.0662 0 0 1 .0284-.0615l4.8303-2.7866a4.4992 4.4992 0 0 1 6.6802 4.66zM8.3065 12.863l-2.02-1.1638a.0804.0804 0 0 1-.038-.0567V6.0742a4.4992 4.4992 0 0 1 7.3757-3.4537l-.142.0805L8.704 5.459a.7948.7948 0 0 0-.3927.6813zm1.0976-2.3654l2.602-1.4998 2.6069 1.4998v2.9994l-2.5974 1.4997-2.6067-1.4997Z"/><defs><radialGradient id="lg" cx="0.5" cy="0.5" r="0.6"><stop offset="0" stop-color="#2d6fd6"/><stop offset="0.55" stop-color="#1443a8"/><stop offset="1" stop-color="#0a2478"/></radialGradient></defs><rect x="1396.5" y="1035" width="30" height="29.5" fill="url(#lg)"/><circle cx="1400" cy="1040" r="0.8" fill="#9cc8ff" opacity="0.7"/><circle cx="1422" cy="1042" r="0.8" fill="#9cc8ff" opacity="0.7"/><circle cx="1403" cy="1058" r="0.8" fill="#9cc8ff" opacity="0.7"/><circle cx="1420" cy="1060" r="0.8" fill="#9cc8ff" opacity="0.7"/><circle cx="1411" cy="1038" r="0.8" fill="#9cc8ff" opacity="0.7"/><circle cx="1399" cy="1050" r="0.8" fill="#9cc8ff" opacity="0.7"/><circle cx="1424" cy="1052" r="0.8" fill="#9cc8ff" opacity="0.7"/><circle cx="1415" cy="1062" r="0.8" fill="#9cc8ff" opacity="0.7"/><g opacity="0.8"><path d="M1408 1049V1046A3.5 3.5 0 0 1 1415 1046V1049" stroke="#a9d2ff" stroke-width="1.7" fill="none"/><rect x="1406.3" y="1048.5" width="10.4" height="8" rx="1.2" fill="#a9d2ff"/><circle cx="1411.5" cy="1052.3" r="1.3" fill="#1a3f90"/></g><path d="M1524.5 1053L1531 1046.5L1537.5 1053" stroke="#fff" stroke-width="2" fill="none"/><rect x="1567" y="1040.5" width="7.8" height="13" rx="3.9" stroke="#8fd3c3" stroke-width="1.6" fill="none"/><path d="M1564.3 1049.5A6.6 6.6 0 0 0 1577.5 1049.5M1570.9 1056V1060" stroke="#8fd3c3" stroke-width="1.6" fill="none"/><rect x="1601.5" y="1043.2" width="19" height="12.5" rx="1.5" stroke="#fff" stroke-width="1.5" fill="none"/><path d="M1604.5 1046.5H1617.5M1605 1049.5H1617M1607.5 1052.5H1614.5" stroke="#fff" stroke-width="1.3" stroke-dasharray="1.5 1.2"/><path d="M1696.8 1047.3A13.5 13.5 0 0 1 1715.2 1047.3M1699.8 1050.6A9 9 0 0 1 1712.2 1050.6M1702.8 1053.6A4.5 4.5 0 0 1 1709.2 1053.6" stroke="#fff" stroke-width="1.6" fill="none" stroke-linecap="round"/><circle cx="1706" cy="1056" r="1.4" fill="#fff"/><path d="M1726.5 1046.5H1730L1735.5 1042V1057.5L1730 1053H1726.5Z" stroke="#fff" stroke-width="1.5" fill="none" stroke-linejoin="round"/><path d="M1738.5 1046.5A4.5 4.5 0 0 1 1738.5 1053M1741 1044A8 8 0 0 1 1741 1055.5M1743.5 1041.8A11.5 11.5 0 0 1 1743.5 1057.8" stroke="#fff" stroke-width="1.5" fill="none"/><rect x="1758" y="1045" width="15.5" height="11" rx="2" stroke="#fff" stroke-width="1.6" fill="none"/><rect x="1774" y="1048" width="2" height="5" fill="#fff"/><path d="M1756 1053C1756 1046 1760 1043 1765 1041C1762 1046 1766 1049 1764 1054Z" fill="#fff"/><path d="M1878 1054.5H1892M1880 1054.5V1048A5 5 0 0 1 1885 1043A5 5 0 0 1 1890 1048V1054.5M1883 1057A2 2 0 0 0 1887 1057" stroke="#fff" stroke-width="1.5" fill="none"/><path d="M1885.5 1041H1889L1885.5 1045H1889M1890 1036.5H1894L1890 1041H1894" stroke="#fff" stroke-width="1.3" fill="none"/></g></svg>
<div class="t" style="left:43.80px;top:1032.50px;font:400 14px/1 'Liberation Sans',sans-serif;color:#3a1a1e;letter-spacing:0.000px;">6</div>
<div class="t" style="left:62.73px;top:1031.65px;font:400 17px/1 'Liberation Sans',sans-serif;color:#ffffff;letter-spacing:0.000px;transform:scaleX(0.9335);transform-origin:0 0;">Light rain</div>
<div class="t" style="left:65.29px;top:1051.45px;font:400 17px/1 'Liberation Sans',sans-serif;color:#d2d2d2;letter-spacing:0.000px;transform:scaleX(0.9062);transform-origin:0 0;">Tomorrow</div>
<div class="t" style="left:491.76px;top:1042.05px;font:400 19px/1 'Liberation Sans',sans-serif;color:#d0d0d0;letter-spacing:0.000px;transform:scaleX(0.8614);transform-origin:0 0;">Search</div>
<div class="t" style="left:1643.79px;top:1043.47px;font:400 15.8px/1 'Liberation Sans',sans-serif;color:#ffffff;letter-spacing:0.000px;transform:scaleX(0.8795);transform-origin:0 0;">ENG</div>
<div class="t" style="left:1811.05px;top:1032.00px;font:400 16px/1 'Liberation Sans',sans-serif;color:#ffffff;letter-spacing:0.000px;transform:scaleX(0.9331);transform-origin:0 0;">7:45 PM</div>
<div class="t" style="left:1795.70px;top:1051.70px;font:400 16px/1 'Liberation Sans',sans-serif;color:#ffffff;letter-spacing:-0.107px;">7/31/2025</div>
</body></html>
